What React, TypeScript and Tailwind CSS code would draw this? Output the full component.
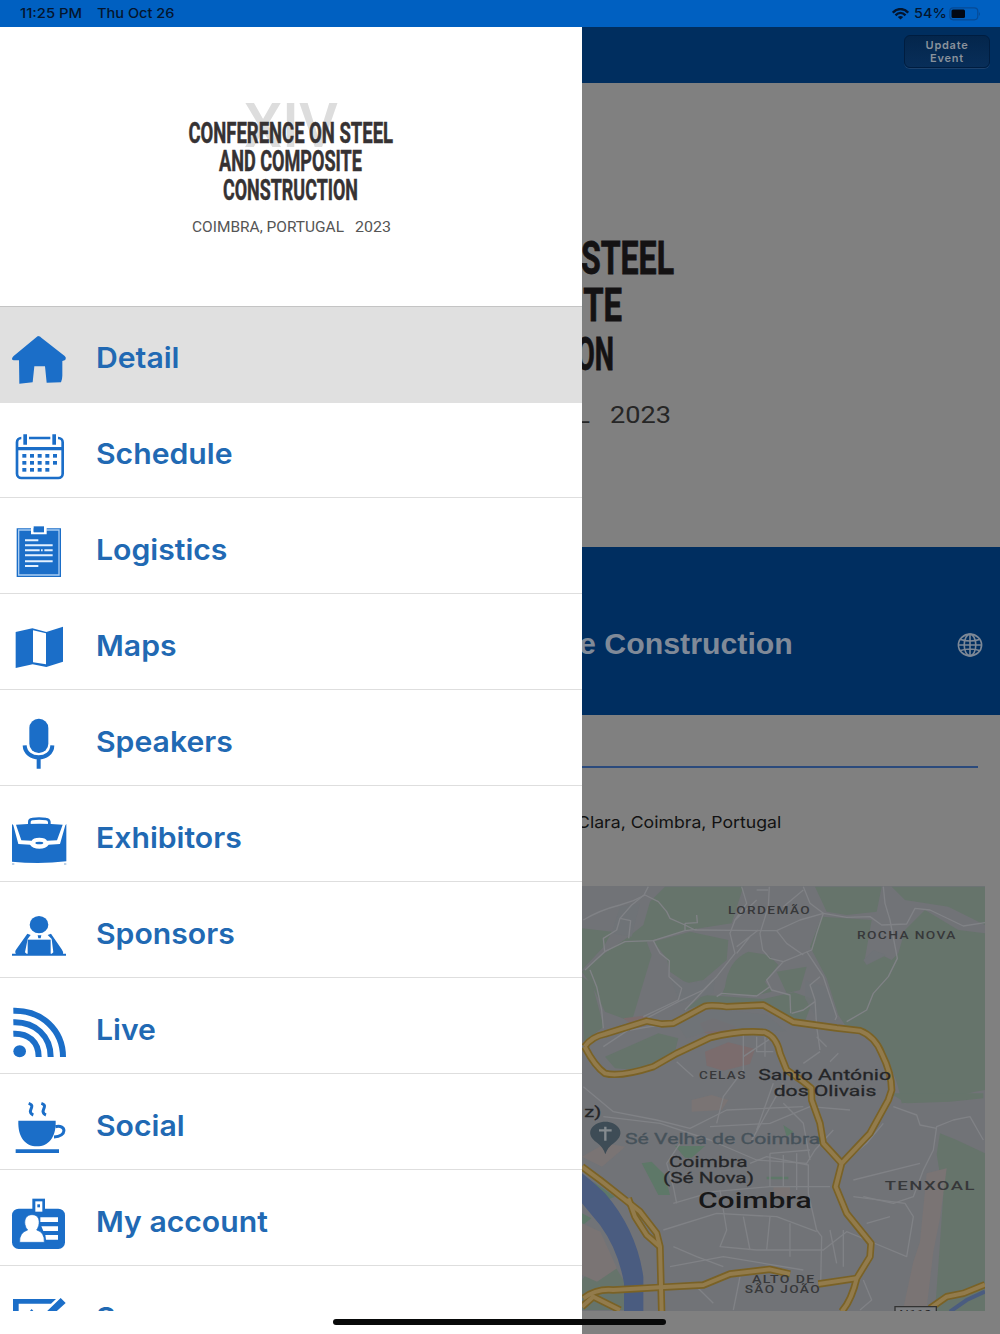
import React from "react";

const BLUE = "#1b6ec8";

const icons: Record<string, { top: number; art: React.ReactNode }> = {
  Detail: {
    top: 18,
    art: (
      <path d="M116 109q4 0 8 4l70 55q5 4 3 10-1 4-10 5v44q0 10-4 20l-43 1-5-49h-32l-5 48-40 4-1-70H41q-6-1-5-5 1-5 5-8l68-56q4-4 7-4Z" />
    ),
  },
  Schedule: {
    top: 306,
    art: (
      <>
        <rect x="51" y="414" width="137" height="120" rx="13" fill="none" stroke={BLUE} strokeWidth="8" />
        <path d="M51 441h137v10H51z" />
        <path d="M64 405h23v24H64zM151 405h23v24h-23z" fill="#fff" />
        <path d="M70 403h11v31H70zM157 403h11v31h-11z" />
        {[462, 483, 504].map((y, r) =>
          [67, 90, 113, 136, 159]
            .slice(0, r === 2 ? 4 : 5)
            .map((x) => <rect key={`${x}-${y}`} x={x} y={y} width="12" height="11" />)
        )}
      </>
    ),
  },
  Logistics: {
    top: -6,
    art: (
      <>
        <path d="M50 85h133v146H50z" />
        <path d="M94 90H56v135h121V90h-38" fill="none" stroke="#a9cdf2" strokeWidth="4" />
        <path d="M93 83h8v12h31V83h8v20H93z" fill="#fff" />
        <path d="M101 79h31v18h-31z" />
        <path
          d="M75 121h40M75 136h83M75 151h44M123 151h5M133 151h25M75 166h83M75 184h83M75 198h40"
          stroke="#e4f1ff"
          strokeWidth="6"
        />
      </>
    ),
  },
  Maps: {
    top: 282,
    art: (
      <>
        <path d="M47 396l50-11 42 11 50-16v105l-50 16-41-8-51 11z" />
        <path d="M99 391l39 9v93l-39-6z" fill="#fff" />
      </>
    ),
  },
  Speakers: {
    top: -30,
    art: (
      <>
        <rect x="88" y="56" width="57" height="103" rx="28" />
        <path d="M74 136c2 48 82 48 83 0M116 172v34" fill="none" stroke={BLUE} strokeWidth="12" />
      </>
    ),
  },
  Exhibitors: {
    top: 258,
    art: (
      <>
        <path d="M36 372l4 4 15 56 35 2q8 12 28 12t28-12l34-2 16-56 3-4v112q-80 9-163 1z" />
        <path d="M48 374q70-6 140 0l-17 47-30 1q-4-9-23-9t-23 9l-31-1z" />
        <path d="M88 373v-7q0-8 9-9 20-3 41 0 9 1 10 9v7" fill="none" stroke={BLUE} strokeWidth="8" />
        <ellipse cx="118" cy="430" rx="25" ry="11" fill="#fff" />
        <ellipse cx="118" cy="429" rx="12" ry="4" />
        <path d="M36 492h7M192 492h7" stroke="#7da4cf" strokeWidth="3" />
      </>
    ),
  },
  Sponsors: {
    top: -54,
    art: (
      <>
        <ellipse cx="117" cy="74" rx="28" ry="26" />
        <path d="M82 101l10 4-9 12-8 40 5 5H48q-5-6 1-14zM153 101l-10 4 12 12 5 40-5 5h34q2-6-4-14z" />
        <path d="M83 119h69v43H83z" />
        <path d="M113 106h11l-2 9h-7zM36 161h162v6H36z" />
      </>
    ),
  },
  Live: {
    top: 234,
    art: (
      <>
        <ellipse cx="59" cy="454" rx="19" ry="18" />
        <path
          d="M40 401c44-2 76 24 76 70M40 367c66-2 112 42 112 104M40 332c86-2 149 60 149 139"
          fill="none"
          stroke={BLUE}
          strokeWidth="18"
        />
      </>
    ),
  },
  Social: {
    top: -48,
    art: (
      <>
        <path d="M55 92h112c2 49-21 77-56 77S53 141 55 92ZM47 178h130v11H47z" />
        <path
          d="M166 110c34-8 36 30-4 31M86 40q12 4 9 12t-4 12q1 8 9 11M124 40q12 4 9 12t-4 12q1 8 9 11"
          fill="none"
          stroke={BLUE}
          strokeWidth="9"
        />
      </>
    ),
  },
  "My account": {
    top: 240,
    art: (
      <>
        <rect x="36" y="356" width="159" height="121" rx="20" />
        <path d="M97 326h38v42H97z" />
        <path d="M106 334h21v31h-21z" fill="#fff" />
        <rect x="112" y="343" width="8" height="9" />
        <path d="M121 382h53v14h-53zM124 409h50v14h-44zM136 435h38v14h-36z" fill="#fff" />
        <path
          d="M96 374c20 0 24 17 20 33q-3 9-6 13 24 6 23 37H59q-2-29 24-37-6-6-8-16c-3-16 4-30 21-30Z"
          fill="#fff"
          stroke={BLUE}
          strokeWidth="2"
        />
      </>
    ),
  },
  Survey: {
    top: 528,
    art: (
      <>
        <path d="M39 627h129l-15 14H56v40H39z" />
        <path d="M182 624l15 15-44 40h-28zM89 664l6-7 6 7z" />
      </>
    ),
  },
};

function MenuRow({ name, label = name, className = "" }: { name: string; label?: string; className?: string }) {
  const icon = icons[name];
  return (
    <li className={`flex shrink-0 ${className}`}>
      <svg
        className="h-24 w-20 shrink-0 overflow-visible"
        viewBox={`0 ${icon.top} 240 288`}
        fill={BLUE}
        aria-hidden="true"
      >
        {icon.art}
      </svg>
      <span className="ml-[16px] mt-[34px] origin-left scale-x-[1.04] whitespace-nowrap text-[29px] leading-9 font-semibold text-[#2169b3]">
        {label}
      </span>
    </li>
  );
}

function ConferenceLogo() {
  return (
    <svg className="h-40 w-[250px]" viewBox="170 90 250 160" fontFamily="Roboto" aria-label="Conference logo">
      <text x="244" y="147" fontSize="61" fontWeight="500" fill="#dddddd" textLength="94" lengthAdjust="spacingAndGlyphs">
        XIV
      </text>
      <g fontWeight="700" fontSize="29" fill="#363233" stroke="#363233" strokeWidth=".5">
        <text x="188.500" y="142.500" textLength="204.500" lengthAdjust="spacingAndGlyphs">CONFERENCE ON STEEL</text>
        <text x="219" y="171.200" textLength="143" lengthAdjust="spacingAndGlyphs">AND COMPOSITE</text>
        <text x="223" y="200" textLength="135" lengthAdjust="spacingAndGlyphs">CONSTRUCTION</text>
      </g>
      <g fill="#555" fontSize="15">
        <text x="192" y="232" textLength="152" lengthAdjust="spacingAndGlyphs">COIMBRA, PORTUGAL</text>
        <text x="355" y="232" textLength="36" lengthAdjust="spacingAndGlyphs">2023</text>
      </g>
    </svg>
  );
}

function HeroLogo() {
  return (
    <svg className="h-[220px] w-[418px]" viewBox="582 220 418 220" fontFamily="Roboto" aria-label="Conference logo">
      <g fontWeight="700" fontSize="46.500" fill="#141213" stroke="#141213" strokeWidth=".8">
        <text x="581" y="273.500" textLength="93" lengthAdjust="spacingAndGlyphs">STEEL</text>
        <text x="574" y="321" textLength="48" lengthAdjust="spacingAndGlyphs">ITE</text>
        <text x="576" y="370" textLength="38" lengthAdjust="spacingAndGlyphs">ON</text>
      </g>
      <g fill="#262626" fontSize="24">
        <text x="577" y="423">L</text>
        <text x="610" y="423" textLength="61" lengthAdjust="spacingAndGlyphs">2023</text>
      </g>
    </svg>
  );
}

const minorRoads = [
  "M40 150Q90 120 150 105L190 92L225 75L265 95L290 125L300 145L345 165L375 180L620 182L690 150L760 130L830 142L900 140L935 165L1010 162L1035 115L1080 120L1180 168L1245 158",
  "M235 50L222 75L185 105L150 145L140 180L100 205L104 245L45 300",
  "M104 245L165 215L250 212L345 182L380 178M150 145L182 152L176 205M345 160L382 158L380 135M345 160V182",
  "M250 212L270 250L298 272L297 320L335 355L325 390L220 440",
  "M60 300L80 350L95 420L100 475M100 530L220 450L325 395L400 360L440 320L495 250L480 190L495 150L530 100L515 50",
  "M598 50L595 110L570 190L578 240L600 265L640 275L590 330L605 360L660 375L662 430",
  "M620 182L650 220L700 255M500 250L540 200M500 230L565 180M640 275L725 240L740 190L760 130L720 100L700 50M560 60H595",
  "M710 245L760 320L780 380L800 440L795 450M750 320L720 345L735 390L740 470L750 540",
  "M665 430L700 420L735 395M495 150L560 90M640 110L700 60",
  "M440 380L455 370L560 378L600 350M345 420L430 330",
  "M940 50L945 100L960 150L982 265L955 320L910 370L890 420L830 455",
  "M180 480L330 455M320 575L370 620M520 490V600L460 680L440 760M520 560L610 500M560 500V545H610M585 500V560",
  "M740 500L770 530M780 575L805 550M700 580L750 545M610 640L560 780M640 640L540 820",
  "M40 650L130 725L260 750L360 775L470 720L700 710",
  "M100 740L270 760L420 810L560 870L710 880L735 840L790 780M640 700L700 760L720 870",
  "M540 880L590 860L715 885L715 970L740 1080L755 1100L752 1240",
  "M310 1000L430 965L600 950L780 950M280 1080L440 1030L620 1040L740 1085",
  "M450 960L470 1080L450 1130L560 1140L760 1140L830 1085L890 1110",
  "M520 1040L540 1140M600 1040L590 1140M660 1060V1160M780 1080L800 1180M820 1080L820 1190",
  "M320 1000L310 950L290 880L330 820M420 770L600 760L720 710L840 720",
  "M880 980L970 1000L1030 980L1060 900L1090 840L1100 770L1150 750L1200 740L1240 810",
  "M970 710L1040 735L1050 765L1100 775M890 1110L1010 1160L1030 1040L1005 1000L850 980M890 1060L960 1040",
  "M830 870L890 820L940 760M850 930L1050 880M380 1250L430 1300M510 1220L490 1320M880 1230L905 1290L870 1320",
  "M310 1130L380 1160L460 1190M300 1190L460 1160L700 1200",
  "M600 850L720 840M600 950V850M640 950V855M680 960V850",
];

const highways = [
  "M44 530Q65 500 105 492L230 453L275 462L310 460L405 409Q420 404 470 410L580 405L670 456L800 474L870 482Q915 500 935 550Q965 610 965 660L955 690L900 790L815 880L797 950L830 1030L903 1120L900 1160L860 1225Q845 1290 815 1325",
  "M44 530Q75 590 105 610Q150 622 250 590L320 550L420 503Q510 480 585 487Q620 500 630 550L650 600L700 635L724 655L725 690L750 760L760 820L815 880",
  "M36 890L90 930L160 985L210 1025L260 1090L270 1130L275 1325",
  "M175 985L195 1040L230 1095L270 1130",
  "M40 1285Q80 1255 130 1260L270 1252L400 1245L480 1212L600 1198L660 1212M745 1242L860 1225M36 1310L70 1280L150 1320",
  "M1080 1315L1130 1280L1180 1270L1245 1244",
];

function CityMap() {
  return (
    <svg
      className="h-[425px] w-[403px] bg-[#717377]"
      viewBox="36 48 1209 1275"
      preserveAspectRatio="none"
      fontFamily="Roboto"
      aria-label="Map of Coimbra"
    >
      <g fill="#66746b">
        <path d="M285 50h235l-35 110-130 20-125 35 15 40-60 200-80-30-40-80-30-40 75-60 60-40 50-40 20-70z" />
        <path d="M36 175l90 10-25 45-65 70zM36 320l30 20 35 130-60 45z" />
        <path d="M250 215l110-30 115 25-5 60-70 60-50 10-50-35-10-40zM465 350q10-80 70-105l60 10 30 30-40 50 20 30-40 10h-110z" />
        <path d="M620 305l90-15-20 70-40 10zM400 375l180 12 90-20 60 20-30 80-110-55-190-10-60 20z" />
        <path d="M735 50h200l-15 75-90 10-60-10zM965 50h280v115l-110-55-130-20z" />
        <path d="M755 140l150 10-20 115 50-10 30 15 20-20 20-70 60-60 100 60 80 10v470l-30 5-100 25-120 10q-10-70-60-170l-110-65-20-30-35-110-50-95z" />
        <path d="M105 560l160-70 60 15-10 40-110 55-70-5z" />
        <path d="M1110 790l50 20 85 40v473h-150q15-200 25-350l-20-120zM36 1230l70-90 60 100v80H36z" />
        <path d="M960 670h280v15l-100 10-130 5z" />
      </g>
      <g fill="#5e7868">
        <path d="M315 828h90l-40 35h-20zM215 880l30-5 40 40 15 60h-35zM640 765l30 20-20 15zM590 920h65v8h-65zM36 1030l28 15-28 22zM70 935l65 45-25 10z" />
      </g>
      <g fill="#7a7474">
        <path d="M390 460l40-15 70 25-20 25-75-5zM405 545l70-28 80 20-15 45-80 20-50-15zM160 445l60-8 40 18-60 20z" fill="#7b6c6d" />
        <path d="M1070 910l60-15-20 150-20 100-20 170h-70l30-140 20-60zM365 690l60-15 50 15-20 30-90 5zM36 860l70-40 60 10-70 60z" />
        <path d="M610 950h50v30h-50zM36 1060l55 25 50 110-60 40-45-20z" />
      </g>
      <g fill="#6f7377">
        <path d="M150 110l60-10-25 100-60-10zM300 320l60 20 75-15-5 45-100 30zM880 270l30-30 40 15-60 30z" />
        <path d="M705 330l60 20 40 100-60 5-40-70zM320 460l120-45 150 20 60 50-110-10-130 10-60 20z" fillOpacity=".8" />
      </g>
      <path d="M36 910Q70 935 105 970Q200 1080 220 1220V1325H162V1240Q145 1140 90 1065L36 1000Z" fill="#4a5c80" />
      <path d="M1245 1265L1190 1290L1140 1325" fill="none" stroke="#4a5c80" strokeWidth="12" />
      <g fill="none" stroke="#808286" strokeWidth="4" strokeLinejoin="round">
        {minorRoads.map((d) => <path key={d} d={d} />)}
      </g>
      <g fill="none" stroke="#7a6226" strokeWidth="22" strokeLinejoin="round">
        {highways.map((d) => <path key={d} d={d} />)}
      </g>
      <g fill="none" stroke="#927b4c" strokeWidth="12" strokeLinejoin="round">
        {highways.map((d) => <path key={d} d={d} />)}
      </g>
      <path d="M106 853q-7-22-24-34c-45-32-10-64 24-64s68 32 26 64q-19 12-26 34Z" fill="#3e4c56" />
      <path d="M106 770v42M87 781h38" stroke="#858b8f" strokeWidth="7" />
      <g fill="#37383a" fontWeight="500" fontSize="30" letterSpacing="3">
        <text x="474" y="132" textLength="249" lengthAdjust="spacingAndGlyphs">LORDEMÃO</text>
        <text x="861" y="208" textLength="299" lengthAdjust="spacingAndGlyphs">ROCHA NOVA</text>
        <text x="387" y="627" textLength="143" lengthAdjust="spacingAndGlyphs">CELAS</text>
        <text x="944" y="961" fontSize="39" textLength="274" lengthAdjust="spacingAndGlyphs">TENXOAL</text>
        <text x="546" y="1239" textLength="191" lengthAdjust="spacingAndGlyphs">ALTO DE</text>
        <text x="524" y="1269" textLength="229" lengthAdjust="spacingAndGlyphs">SÃO JOÃO</text>
      </g>
      <g fill="#242527" stroke="#242527" strokeWidth=".8" fontSize="46">
        <text x="565" y="630" textLength="398" lengthAdjust="spacingAndGlyphs">Santo António</text>
        <text x="611" y="677" textLength="308" lengthAdjust="spacingAndGlyphs">dos Olivais</text>
        <text x="297" y="891" textLength="236" lengthAdjust="spacingAndGlyphs">Coimbra</text>
        <text x="279" y="938" textLength="273" lengthAdjust="spacingAndGlyphs">(Sé Nova)</text>
        <text x="43" y="741" textLength="51" lengthAdjust="spacingAndGlyphs">z)</text>
      </g>
      <text x="165" y="823" fontSize="46" fill="#46525a" stroke="#46525a" strokeWidth="1" textLength="586" lengthAdjust="spacingAndGlyphs">
        Sé Velha de Coimbra
      </text>
      <text x="384" y="1014" fontSize="66" fontWeight="500" fill="#171718" textLength="341" lengthAdjust="spacingAndGlyphs">
        Coimbra
      </text>
      <path d="M975 1330v-20h124v20" fill="#7d7f82" stroke="#333" strokeWidth="4" />
      <text x="988" y="1343" fontSize="34" fill="#252525" textLength="97" lengthAdjust="spacingAndGlyphs">N110</text>
    </svg>
  );
}

function StatusBar() {
  return (
    <div className="flex h-[27px] shrink-0 items-center bg-[#0060c1] pr-[19px] pl-5 text-[13px] font-medium text-[#04152e]">
      <span className="w-[76.500px] origin-left scale-x-[1.14] whitespace-nowrap">11:25 PM</span>
      <span className="origin-left scale-x-[1.12] whitespace-nowrap">Thu Oct 26</span>
      <svg className="ml-auto h-3 w-[17px]" viewBox="0 0 17 12" fill="none" stroke="#04152e" strokeWidth="2.400">
        <path d="M.8 4.600C5-.1 12-.1 16.200 4.600M3.500 7.300c3-3 7-3 10 0" />
        <path d="M8.500 11.500L5.800 8.900q2.700-1.900 5.400 0z" fill="#04152e" stroke="none" />
      </svg>
      <span className="ml-[5px] w-8 origin-left scale-x-[1.11]">54%</span>
      <svg className="ml-[3px] h-[14px] w-[32px]" viewBox="0 0 32 14">
        <rect x=".8" y=".8" width="28" height="12" rx="3.500" fill="none" stroke="#064a95" strokeWidth="1.200" />
        <rect x="2.500" y="2.500" width="13.500" height="8.600" rx="1.500" fill="#020814" />
        <path d="M30 5q2 2 0 4z" fill="#064a95" />
      </svg>
    </div>
  );
}

function Drawer() {
  return (
    <aside className="flex w-[582px] shrink-0 flex-col bg-white">
      <header className="flex h-[279px] shrink-0 justify-center pt-[63px] pl-2">
        <ConferenceLogo />
      </header>
      <ul className="flex h-[1005px] flex-col overflow-hidden">
        <MenuRow name="Detail" className="h-[97px] bg-[#e0e0e0] shadow-[inset_0_1px_0_#c4c4c4]" />
        <MenuRow name="Schedule" className="-mt-px h-24 border-b border-[#dedede]" />
        <MenuRow name="Logistics" className="h-24 border-b border-[#dedede]" />
        <MenuRow name="Maps" className="h-24 border-b border-[#dedede]" />
        <MenuRow name="Speakers" className="h-24 border-b border-[#dedede]" />
        <MenuRow name="Exhibitors" className="h-24 border-b border-[#dedede]" />
        <MenuRow name="Sponsors" className="h-24 border-b border-[#dedede]" />
        <MenuRow name="Live" className="h-24 border-b border-[#dedede]" />
        <MenuRow name="Social" className="h-24 border-b border-[#dedede]" />
        <MenuRow name="My account" className="h-24 border-b border-[#dedede]" />
        <MenuRow name="Survey" className="h-24" />
      </ul>
    </aside>
  );
}

function EventPage() {
  return (
    <main className="flex min-w-0 flex-1 flex-col overflow-hidden bg-[#808080]">
      <div className="flex h-[56px] shrink-0 items-start justify-end bg-[#002e5f] pt-2 pr-[10px]">
        <button className="h-[33px] w-[86px] rounded-[6px] border border-[#001d40] bg-linear-to-b from-[#04264c] to-[#082e59] pt-px text-center text-[11px] leading-[13px] font-semibold tracking-[0.75px] text-[#8a929c] shadow-[0_1px_0_#1d426d]">
          Update
          <br />
          Event
        </button>
      </div>
      <div className="flex h-[464px] shrink-0 pt-[137px]">
        <HeroLogo />
      </div>
      <div className="flex h-[168px] shrink-0 items-center justify-between bg-[#002e60] pt-[27px] pr-[17px]">
        <h1 className="-ml-[3px] origin-left scale-x-[1.045] whitespace-nowrap pt-px font-['Liberation_Sans'] text-[29px] font-bold text-[#808a98]">
          e Construction
        </h1>
        <svg className="h-6 w-[26px]" viewBox="0 0 26 24" fill="none" stroke="#7e8997" strokeWidth="1.600">
          <ellipse cx="13" cy="12" rx="11.600" ry="10.900" />
          <ellipse cx="13" cy="12" rx="5.800" ry="10.900" />
          <path d="M13 1v22M1.500 12h23M3.500 6.500q9.500 3 19 0M3.500 17.500q9.500-3 19 0" />
        </svg>
      </div>
      <hr className="mt-[51px] mr-[22px] h-[1.500px] shrink-0 border-0 bg-[#2b4a7c]" />
      <p className="mt-[40px] -ml-[5px] h-[78px] shrink-0 origin-left scale-x-[1.07] whitespace-nowrap text-[16.500px] leading-7 text-[#121212]">
        Clara, Coimbra, Portugal
      </p>
      <CityMap />
    </main>
  );
}

export default function App() {
  return (
    <div className="relative flex h-[1334px] w-[1000px] flex-col overflow-hidden font-['Inter',sans-serif]">
      <StatusBar />
      <div className="flex min-h-0 flex-1">
        <Drawer />
        <EventPage />
      </div>
      <div className="absolute bottom-[9px] left-[333px] h-[6px] w-[333px] rounded-full bg-[#080909]" />
    </div>
  );
}
